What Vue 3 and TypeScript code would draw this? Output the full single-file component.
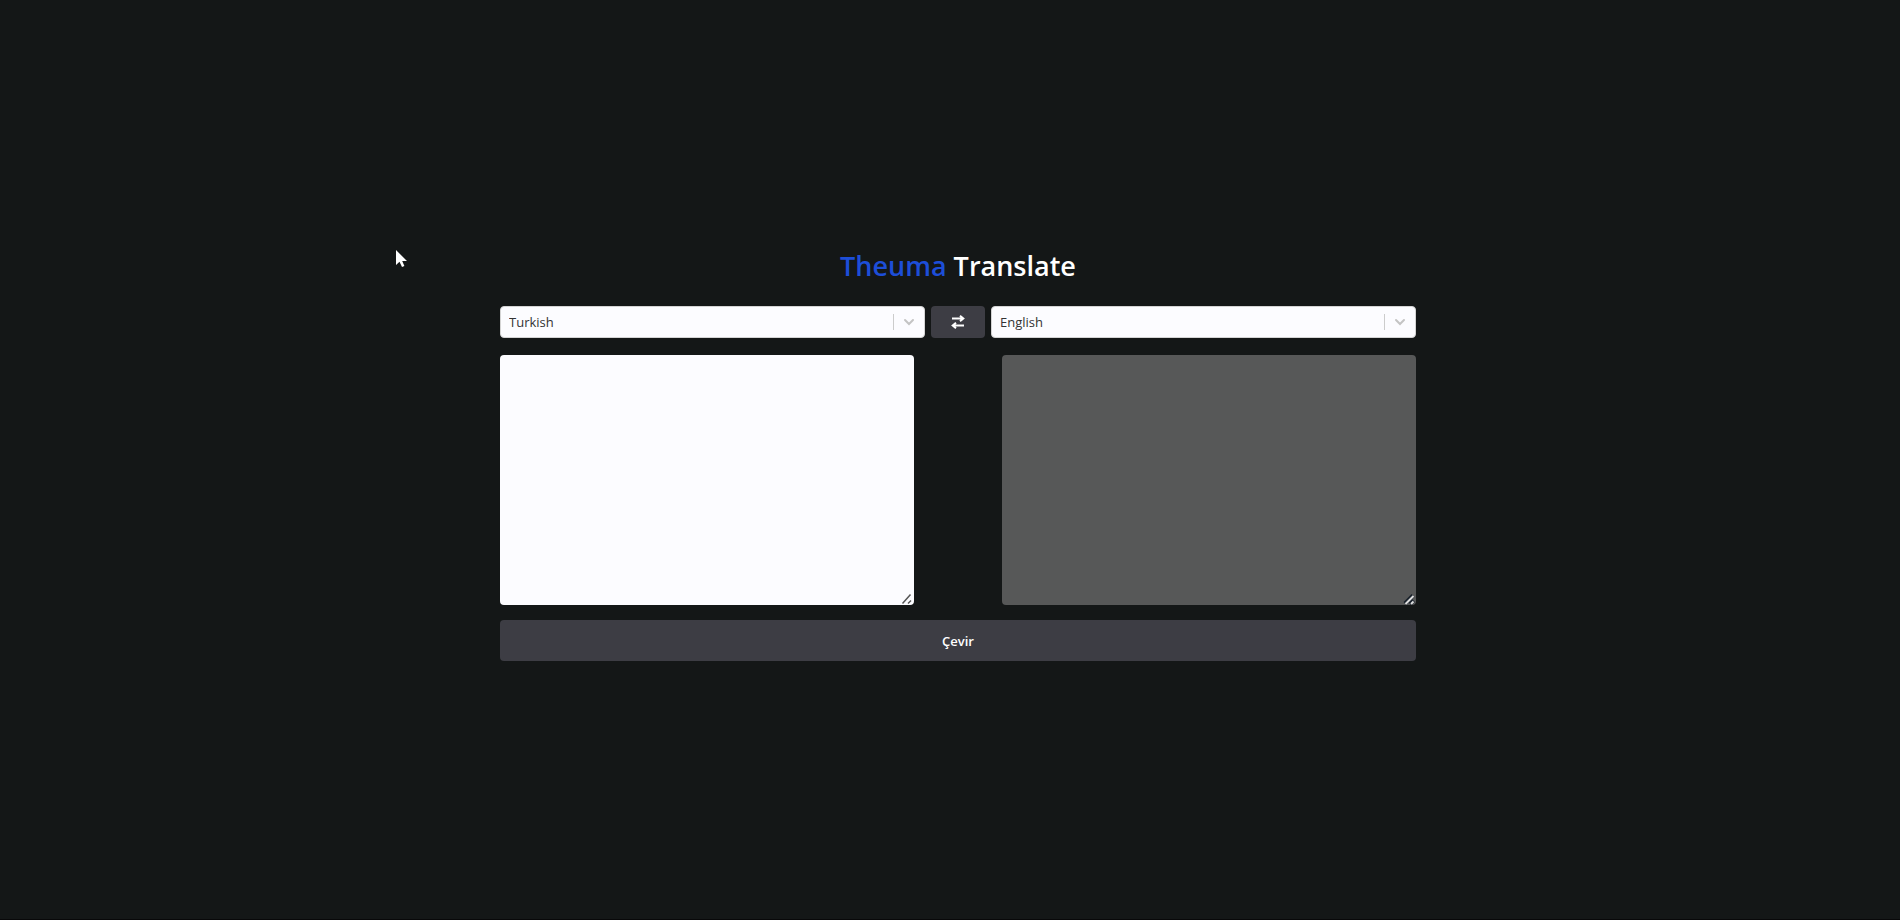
<script setup lang="ts">
import { ref } from 'vue'

const languages: string[] = ['Turkish', 'English']
const source = ref('Turkish')
const target = ref('English')
const input = ref('')
const output = ref('')

function swap(): void {
  const previous = source.value
  source.value = target.value
  target.value = previous
}
</script>

<template>
  <main class="page">
    <form class="translator" @submit.prevent>
      <h1 class="title"><span class="brand">Theuma</span> Translate</h1>
      <div class="languages">
        <div class="picker">
          <select v-model="source" class="select" aria-label="Source language">
            <option v-for="name in languages" :key="name">{{ name }}</option>
          </select>
          <span class="indicator">
            <svg class="chevron" viewBox="0 0 16 16" aria-hidden="true"><path d="M4 6l4 4 4-4" /></svg>
          </span>
        </div>
        <button type="button" class="swap" aria-label="Swap languages" @click="swap">
          <svg class="swap-icon" viewBox="0 0 14 14" aria-hidden="true">
            <path d="M1 3.500h11M9 .8l3.300 2.700L9 6.200M13 10.500H2M5 7.800l-3.300 2.700L5 13.200" />
          </svg>
        </button>
        <div class="picker">
          <select v-model="target" class="select" aria-label="Target language">
            <option v-for="name in languages" :key="name">{{ name }}</option>
          </select>
          <span class="indicator">
            <svg class="chevron" viewBox="0 0 16 16" aria-hidden="true"><path d="M4 6l4 4 4-4" /></svg>
          </span>
        </div>
      </div>
      <div class="texts">
        <div class="pane">
          <textarea v-model="input" class="text" aria-label="Text to translate"></textarea>
          <svg class="grip" viewBox="0 0 12 12" aria-hidden="true">
            <path class="grip-line" d="M1.500 10.500l8-9M7 10.500l3-3" />
          </svg>
        </div>
        <div class="pane">
          <textarea v-model="output" class="text result" aria-label="Translation" disabled></textarea>
          <svg class="grip" viewBox="0 0 12 12" aria-hidden="true">
            <path class="grip-edge" d="M2 10.500l8-8M7 11l3.500-3.500" />
            <path class="grip-light" d="M2.500 11l8-8M8 11l2.500-2.500" />
          </svg>
        </div>
      </div>
      <button type="submit" class="submit">Çevir</button>
    </form>
    <svg class="pointer" viewBox="0 0 12 18" aria-hidden="true">
      <path d="M0 0v15l3.500-3.200L6 17l2.400-1.100L6.200 11H11z" />
    </svg>
  </main>
</template>

<style>
body {
  margin: 0;
  background: #141717;
}
</style>

<style scoped>
.page {
  box-sizing: border-box;
  position: relative;
  display: flex;
  align-items: center;
  justify-content: center;
  min-height: 100vh;
  padding: 0 0 10px 16px;
  border-bottom: 1px solid #080809;
  font-family: "Segoe UI", "Open Sans", "Noto Sans", sans-serif;
}
.translator {
  width: 100%;
  max-width: 916px;
}
.title {
  margin: 0 0 22px;
  font-size: 27px;
  line-height: 36px;
  font-weight: 600;
  text-align: center;
  color: #fff;
}
.brand {
  color: #1d4ed8;
}
.languages {
  display: flex;
  gap: 6px;
}
.picker {
  position: relative;
  flex: 1;
}
.select {
  display: block;
  box-sizing: border-box;
  width: 100%;
  height: 32px;
  padding: 0 40px 0 8px;
  border: 1px solid #d4d4d4;
  border-radius: 4px;
  appearance: none;
  background: #fcfcff;
  color: #333;
  font-family: inherit;
  font-size: 13px;
}
.indicator {
  position: absolute;
  top: 8px;
  right: 8px;
  bottom: 8px;
  display: flex;
  align-items: center;
  padding-left: 7px;
  border-left: 1px solid #ccc;
  pointer-events: none;
}
.chevron {
  width: 16px;
  height: 16px;
  fill: none;
  stroke: #c4c4c4;
  stroke-width: 2;
  stroke-linecap: round;
}
.swap {
  display: flex;
  align-items: center;
  justify-content: center;
  width: 54px;
  padding: 0;
  border: 0;
  border-radius: 4px;
  background: #3d3d44;
}
.swap-icon {
  width: 14px;
  height: 14px;
  fill: none;
  stroke: #fff;
  stroke-width: 2;
}
.texts {
  display: flex;
  justify-content: space-between;
  gap: 88px;
  margin: 17px 0 15px;
}
.pane {
  position: relative;
  flex: 1;
  min-width: 0;
}
.text {
  display: block;
  box-sizing: border-box;
  width: 100%;
  height: 250px;
  padding: 8px;
  border: 0;
  border-radius: 4px;
  outline: 0;
  resize: none;
  background: #fcfcff;
  color: #18181b;
  font-family: inherit;
  font-size: 13px;
}
.result {
  background: #575858;
  color: #fff;
}
.grip {
  position: absolute;
  right: 1px;
  bottom: 0;
  width: 12px;
  height: 12px;
  fill: none;
  pointer-events: none;
}
.grip-line {
  stroke: #555;
  stroke-width: 1.5;
}
.grip-edge {
  stroke: #18202a;
  stroke-width: 4;
}
.grip-light {
  stroke: #ddd;
  stroke-width: 2;
}
.submit {
  display: block;
  width: 100%;
  height: 41px;
  padding: 0;
  border: 0;
  border-radius: 4px;
  background: #3d3d44;
  color: #fff;
  font-family: inherit;
  font-size: 13px;
  font-weight: 600;
}
.pointer {
  position: absolute;
  top: 250px;
  left: 396px;
  width: 12px;
  height: 18px;
  fill: #fff;
}
</style>
